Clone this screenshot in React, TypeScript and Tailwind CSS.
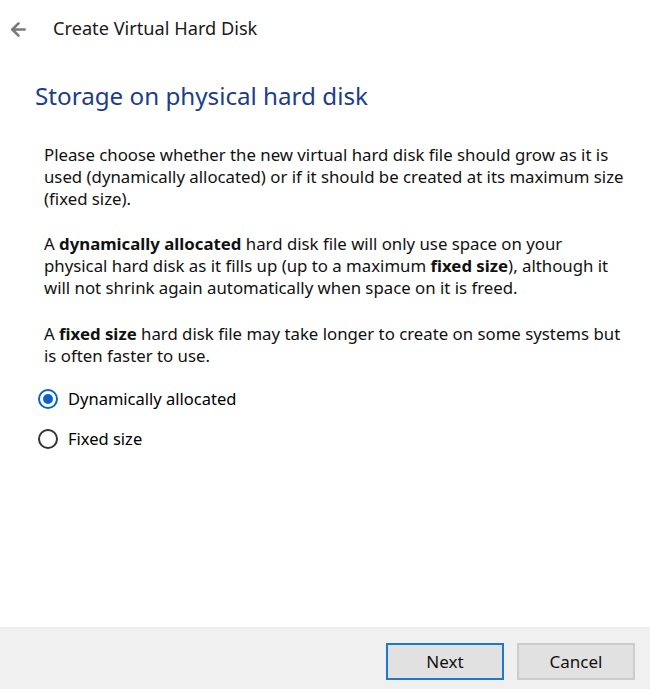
import { ArrowLeft } from 'lucide-react'

const font = { fontFamily: '"Noto Sans", "Open Sans", sans-serif' }

export default function App() {
  return (
    <div className="flex h-[689px] w-[650px] flex-col bg-white text-black" style={font}>
      {/* Title bar */}
      <div className="flex h-[58px] items-center">
        <ArrowLeft className="ml-[8px] h-[21px] w-[21px] text-[#7a7a7a]" strokeWidth={3} />
        <span className="ml-[24px] text-[18.2px] text-[#1a1a1a]">Create Virtual Hard Disk</span>
      </div>

      <div className="flex flex-1 flex-col px-[35px]">
        <h1 className="mt-[21px] text-[24.2px] leading-[34px] text-[#1c3c8c]">Storage on physical hard disk</h1>

        <div className="ml-[9px] mt-[31px] text-[16.8px] leading-[22px] text-[#111]">
          <p className="whitespace-nowrap">
            Please choose whether the new virtual hard disk file should grow as it is
            <br />
            used (dynamically allocated) or if it should be created at its maximum size
            <br />
            (fixed size).
          </p>
          <p className="mt-[23px] whitespace-nowrap">
            A <b>dynamically allocated</b> hard disk file will only use space on your
            <br />
            physical hard disk as it fills up (up to a maximum <b>fixed size</b>), although it
            <br />
            will not shrink again automatically when space on it is freed.
          </p>
          <p className="mt-[24px] whitespace-nowrap">
            A <b>fixed size</b> hard disk file may take longer to create on some systems but
            <br />
            is often faster to use.
          </p>
        </div>

        <div className="mt-[20px] flex flex-col gap-[15px]">
          <label className="flex items-center gap-[10px] text-[16.5px]">
            <span className="ml-[3px] flex h-[20px] w-[20px] items-center justify-center rounded-full border-2 border-[#0a64c8]">
              <span className="h-[10px] w-[10px] rounded-full bg-[#0a64c8]" />
            </span>
            Dynamically allocated
          </label>
          <label className="flex items-center gap-[10px] text-[16.5px]">
            <span className="ml-[3px] h-[20px] w-[20px] rounded-full border-2 border-[#333]" />
            Fixed size
          </label>
        </div>
      </div>

      {/* Footer */}
      <div className="flex h-[62px] items-start justify-end gap-[13px] bg-[#f0f0f0] pr-[15px] pt-[16px]">
        <button className="h-[37px] w-[118px] border-2 border-[#1e78d2] bg-[#e1e1e1] text-[17px] text-[#111]">
          Next
        </button>
        <button className="h-[37px] w-[118px] border-2 border-[#cccccc] bg-[#e1e1e1] text-[17px] text-[#111]">
          Cancel
        </button>
      </div>
    </div>
  )
}
